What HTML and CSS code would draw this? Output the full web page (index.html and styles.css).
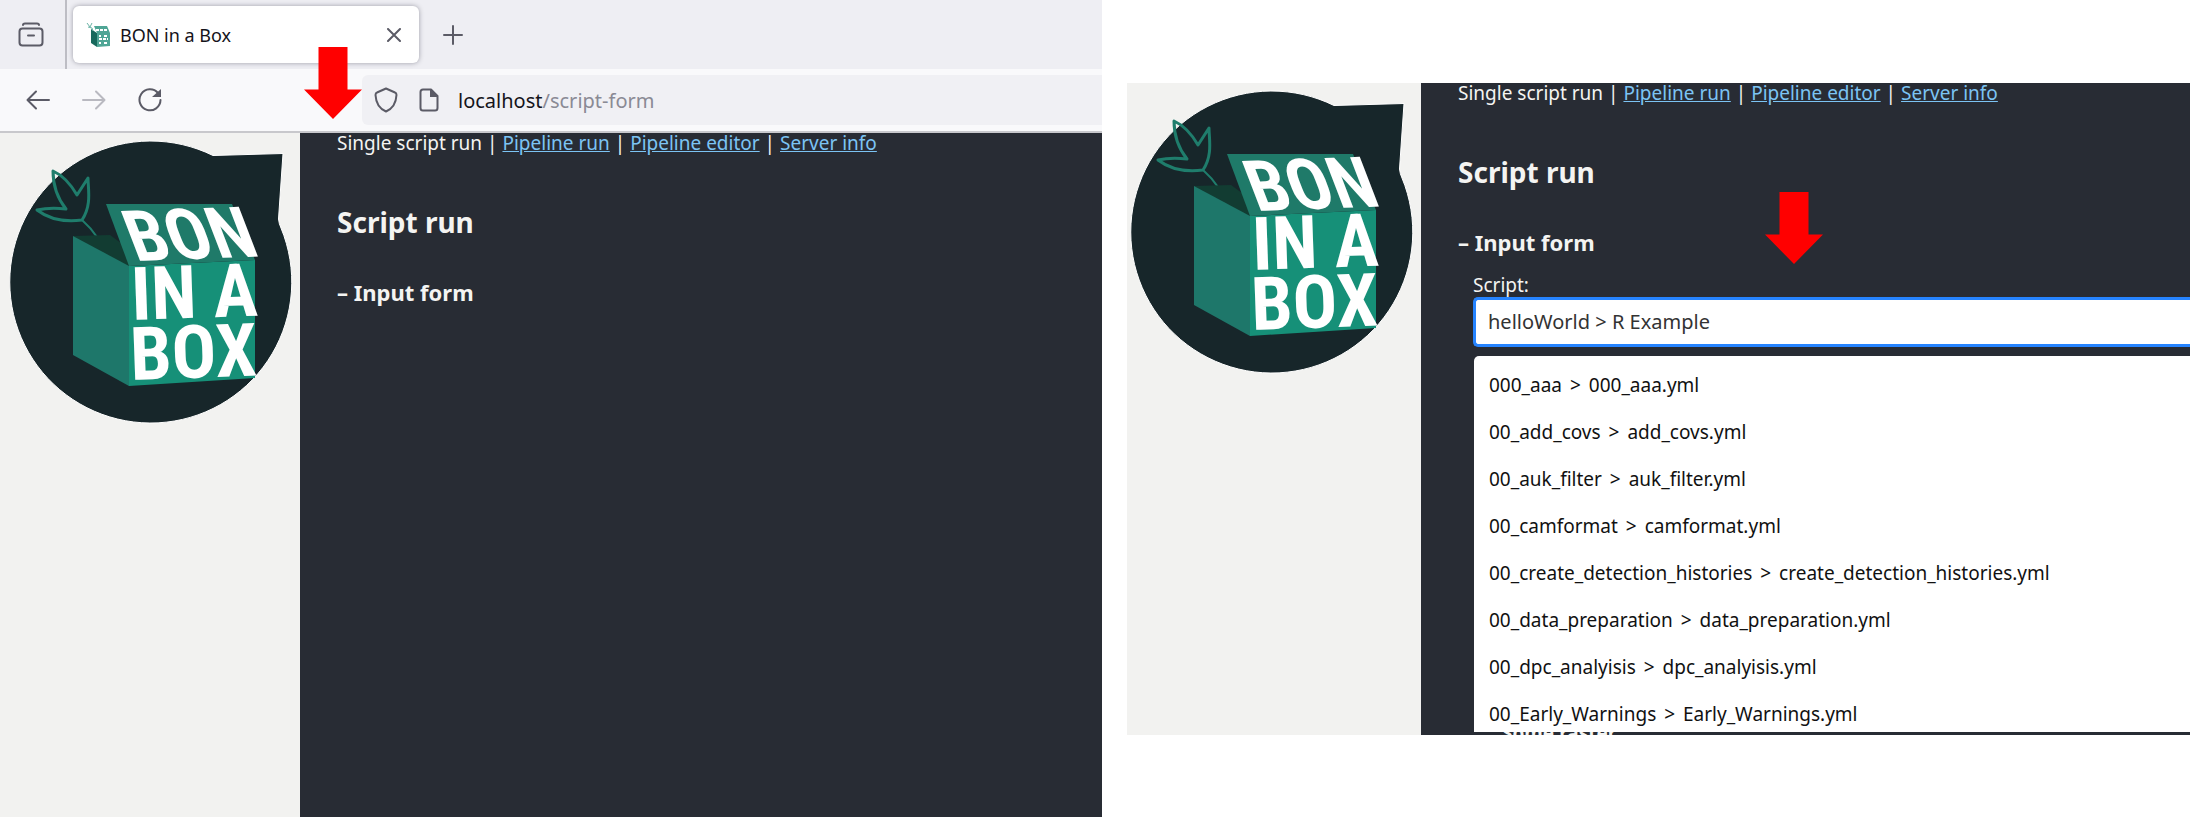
FILE: index.html
```html
<!DOCTYPE html>
<html lang="en">
<head>
<meta charset="utf-8">
<title>BON in a Box</title>
<link rel="stylesheet" href="styles.css">
</head>
<body>
<svg class="defs" aria-hidden="true">
  <symbol id="art" viewBox="0 133 300 300">
    <path d="M213 156.500L283 154.500 278.500 220Q279 225 281 229A141 141 0 1 1 213 156.500Z" fill="#17262a" stroke="#fff" stroke-width="1"/>
    <g fill="none" stroke="#1f7d6c" stroke-linejoin="round">
      <path stroke-width="3" d="M82 221C92 206 88 190 88 179L77 196C70 184 62 176 53 172C53 187 58 200 66 210Q50 208 37 211C50 221 66 223 82 221Z"/>
      <path stroke-width="2" d="M82 221Q100 237 105 256"/>
    </g>
    <path d="M73 237L110 236 140 258 129 268Z" fill="#123c32"/>
    <path d="M73 237L129 267V387L73 356Z" fill="#1e776a"/>
    <path d="M129 267L255 261V379L129 387Z" fill="#169078"/>
    <path d="M106 205H232L255 261 129 267Z" fill="#1f7a69"/>
  </symbol>
  <symbol id="arrow" viewBox="0 0 58 72">
    <path d="M14.500 0H43.500V42.500H58L29 72 0 42.500H14.500Z" fill="#f00"/>
  </symbol>
</svg>

<main class="board">
  <section class="browser">
    <header class="tabs">
      <button class="icon recent" aria-label="Recent browsing">
        <svg width="26" height="26" viewBox="0 0 26 26"><path d="M5 3Q5 1.500 7 1.500H19Q21 1.500 21 3" /><rect x="1.500" y="6.500" width="23" height="17" rx="3"/><path d="M10 13.500H16"/></svg>
      </button>
      <div class="tab">
        <svg class="favicon" viewBox="0 0 26 26"><path d="M5 7L11 11V25L5 21Z" fill="#17695c"/><path d="M11 11H24V24L11 25ZM8 4H21L24 11H11Z" fill="#4fa595"/><path d="M1 1L4 5 6 1M2 5L6 6 7 9" stroke="#6bb3a6" fill="none"/><path d="M10 8H22M13 14H15M18 14H22M13 17H22M13 21H15M18 21H22" stroke="#fff" stroke-width="2" stroke-dasharray="3 1"/></svg>
        <span class="tab-title">BON in a Box</span>
        <button class="icon" aria-label="Close tab"><svg width="14" height="14" viewBox="0 0 14 14"><path d="M1 1L13 13M13 1L1 13"/></svg></button>
      </div>
      <button class="icon new-tab" aria-label="New tab"><svg width="20" height="20" viewBox="0 0 20 20"><path d="M10 1V19M1 10H19"/></svg></button>
    </header>
    <div class="toolbar">
      <button class="icon" aria-label="Back"><svg width="24" height="20" viewBox="0 0 24 20"><path d="M23 10H2M10 1.500L1.500 10 10 18.500"/></svg></button>
      <button class="icon" aria-label="Forward" disabled><svg width="24" height="20" viewBox="0 0 24 20"><path d="M1 10H22M14 1.500L22.500 10 14 18.500"/></svg></button>
      <button class="icon" aria-label="Reload"><svg width="24" height="24" viewBox="0 0 24 24"><path d="M20 5A10.500 10.500 0 1 0 22.500 12"/><path class="solid" d="M23 1V9H14Z"/></svg></button>
      <div class="address">
        <svg width="24" height="26" viewBox="0 0 24 26"><path d="M12 1.500L21 5.500Q22.500 6 22.500 8C22 17 18 22 12 24.500 6 22 2 17 1.500 8Q1.500 6 3 5.500Z"/></svg>
        <svg width="20" height="24" viewBox="0 0 20 24"><path d="M4 1.500H12L18.500 8V20Q18.500 22.500 16 22.500H4Q1.500 22.500 1.500 20V4Q1.500 1.500 4 1.500Z"/><path class="solid" d="M11 1L19 8V9H11Z"/></svg>
        <span class="url">localhost<span class="path">/script-form</span></span>
      </div>
    </div>
    <div class="app">
      <aside class="side">
        <svg class="logo" viewBox="0 0 300 300" role="img" aria-label="BON in a Box">
          <use href="#art" width="300" height="300"/>
          <text class="logo-lid" transform="translate(136 129) rotate(-2) skewX(19)">BON</text>
          <text class="logo-front" transform="translate(132 188) rotate(-2)">IN A</text>
          <text class="logo-front" transform="translate(131 248) rotate(-2)">BOX</text>
        </svg>
      </aside>
      <div class="content">
        <nav>Single script run | <a href="#p">Pipeline run</a> | <a href="#e">Pipeline editor</a> | <a href="#s">Server info</a></nav>
        <h2>Script run</h2>
        <h3>– Input form</h3>
      </div>
    </div>
    <svg class="arrow arrow-page"><use href="#arrow"/></svg>
  </section>

  <section class="app capture">
    <aside class="side">
      <svg class="logo" viewBox="0 0 300 300" role="img" aria-label="BON in a Box">
        <use href="#art" width="300" height="300"/>
        <text class="logo-lid" transform="translate(136 129) rotate(-2) skewX(19)">BON</text>
        <text class="logo-front" transform="translate(132 188) rotate(-2)">IN A</text>
        <text class="logo-front" transform="translate(131 248) rotate(-2)">BOX</text>
      </svg>
    </aside>
    <div class="content">
      <nav>Single script run | <a href="#p">Pipeline run</a> | <a href="#e">Pipeline editor</a> | <a href="#s">Server info</a></nav>
      <h2>Script run</h2>
      <h3>– Input form</h3>
      <form class="form">
        <label for="script">Script:</label>
        <input id="script" type="text" value="helloWorld &gt; R Example">
        <ul class="menu">
          <li>000_aaa <span>&gt;</span> 000_aaa.yml</li>
          <li>00_add_covs <span>&gt;</span> add_covs.yml</li>
          <li>00_auk_filter <span>&gt;</span> auk_filter.yml</li>
          <li>00_camformat <span>&gt;</span> camformat.yml</li>
          <li>00_create_detection_histories <span>&gt;</span> create_detection_histories.yml</li>
          <li>00_data_preparation <span>&gt;</span> data_preparation.yml</li>
          <li>00_dpc_analyisis <span>&gt;</span> dpc_analyisis.yml</li>
          <li>00_Early_Warnings <span>&gt;</span> Early_Warnings.yml</li>
        </ul>
        <p class="field-name">Some raster</p>
      </form>
    </div>
    <svg class="arrow arrow-input"><use href="#arrow"/></svg>
  </section>
</main>
</body>
</html>
```
FILE: styles.css
```css
* { box-sizing: border-box; }
body { margin: 0; background: #fff; font: 19px/26px "Noto Sans", "Open Sans", sans-serif; }
button { border: 0; padding: 0; background: none; }
.defs { position: absolute; width: 0; height: 0; }
.board { display: grid; grid-template-columns: 1102fr 1063fr; column-gap: 25px; align-items: center; min-height: 100vh; overflow: hidden; }

.browser { position: relative; display: flex; flex-direction: column; align-self: stretch; min-width: 0; }
.icon { display: flex; align-items: center; justify-content: center; }
.icon svg, .address svg { fill: none; stroke: #5b5b66; stroke-width: 2; stroke-linecap: round; stroke-linejoin: round; flex: none; }
.icon .solid, .address .solid { fill: #5b5b66; stroke: none; }
.icon:disabled svg { stroke: #b9b9c0; }
.tabs { display: flex; align-items: center; height: 69px; background: #eeeef3; }
.recent { width: 67px; height: 69px; border-right: 2px solid #bdbdc4; padding-right: 4px; }
.tab { display: flex; align-items: center; width: 346px; height: 57px; margin-left: 6px; padding: 0 18px 0 13px; background: #fff; border-radius: 6px; box-shadow: 0 0 5px #9c9ca6; }
.favicon { width: 26px; height: 26px; }
.tab-title { flex: 1; margin-left: 8px; font-size: 18px; color: #15141a; }
.new-tab { margin-left: 24px; }
.toolbar { display: flex; align-items: center; height: 64px; padding-left: 26px; gap: 32px; background: #f9f9fb; border-bottom: 2px solid #c8c8cc; }
.address { display: flex; align-items: center; flex: 1; height: 50px; margin-left: 168px; padding-left: 12px; background: #f0f0f4; border-radius: 6px 0 0 6px; }
.address svg + svg { margin-left: 21px; }
.url { margin-left: 19px; padding-top: 2px; font-size: 20px; color: #15141a; }
.path { color: #8a8a94; }

.app { position: relative; display: flex; flex: 1; min-width: 0; background: #282c34; color: #f4f4f2; overflow: hidden; }
.side { flex: none; width: 300px; background: #f2f2f0; }
.logo { display: block; width: 300px; height: 300px; fill: #fff; font-family: "Liberation Sans Narrow", "Roboto Condensed", "Liberation Sans", sans-serif; font-weight: 700; margin-top: -1px; }
.logo-lid { font-size: 71px; }
.logo-front { font-size: 74px; }
.content { flex: 1; min-width: 0; padding-left: 37px; }
nav { white-space: nowrap; line-height: 20px; }
a { color: #7cc4f4; }
h2, h3 { margin: 0; font-weight: 700; }
h2 { margin-top: 51px; font-size: 28px; line-height: 36px; }
h3 { margin-top: 37px; font-size: 22px; line-height: 30px; }

.capture { height: 652px; }
.capture .side { width: 294px; }
.capture .logo { margin-left: -6px; }
.form { position: relative; margin: 16px 0 0 15px; }
.form label { display: block; line-height: 24px; }
.form input { display: block; width: 100%; height: 50px; padding: 0 12px; font: inherit; font-size: 20px; color: #333; background: #fff; border: 3px solid #2684ff; border-right: 0; border-radius: 5px 0 0 5px; outline: 0; }
.menu { position: absolute; top: 83px; left: 1px; right: 0; height: 376px; margin: 0; padding: 6px 0 0 15px; list-style: none; background: #fff; color: #111; border-radius: 5px 0 0 0; overflow: hidden; white-space: nowrap; }
.menu li { line-height: 47px; }
.menu span { margin: 0 3px; }
.field-name { margin: 373px 0 0 29px; font-weight: 700; }

.arrow { position: absolute; width: 58px; height: 72px; }
.arrow-page { left: 304px; top: 47px; }
.arrow-input { left: 638px; top: 109px; }
```
